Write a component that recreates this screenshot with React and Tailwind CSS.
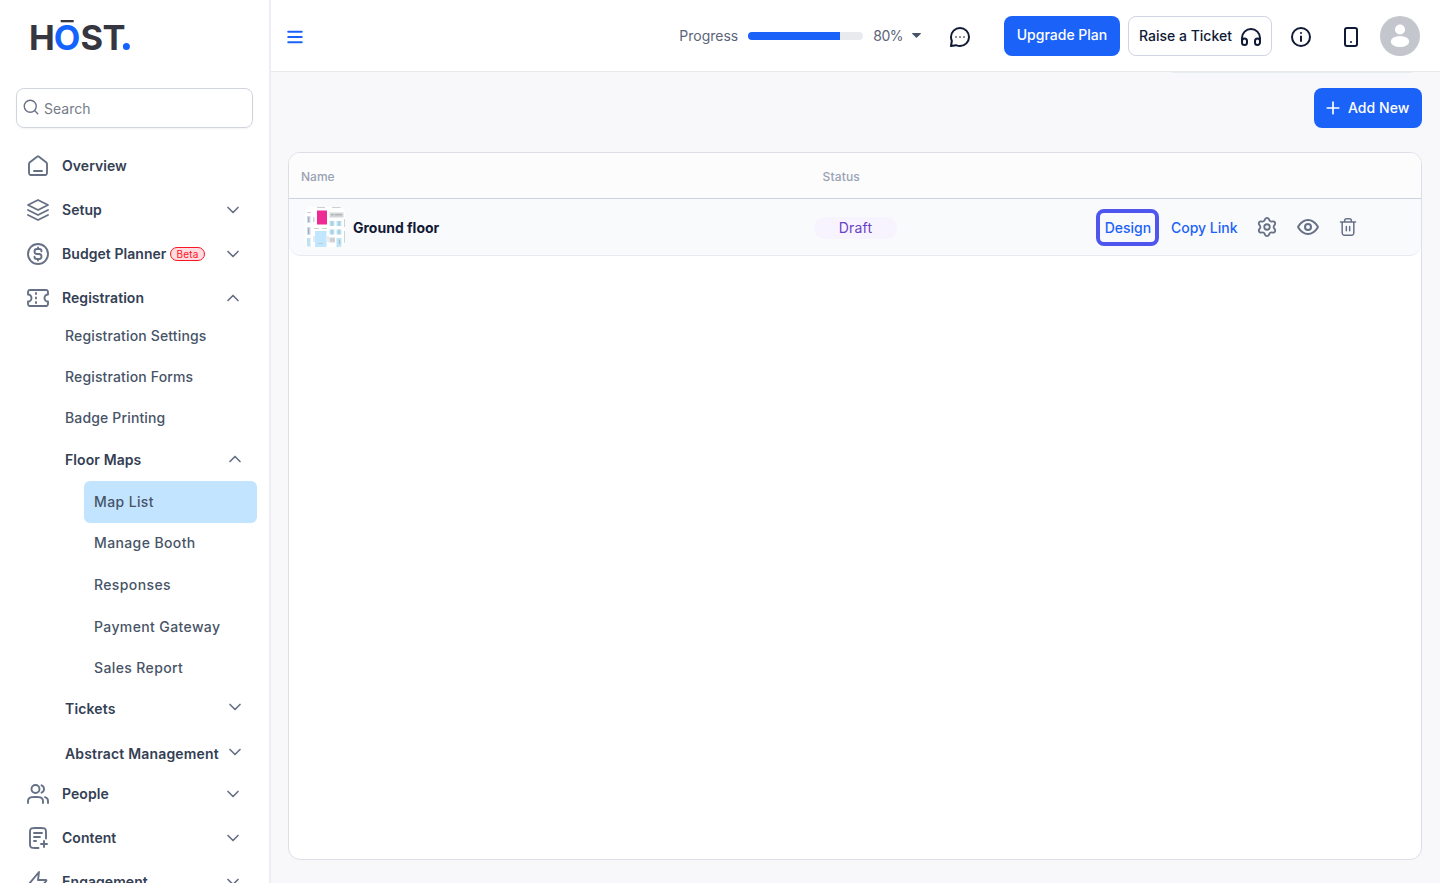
import React, { useState } from "react";

const icons = {
  home: "M8 17H16M11.0177 2.764L4.23539 8.03912C3.78202 8.39175 3.55534 8.56806 3.39203 8.78886C3.24737 8.98444 3.1396 9.20478 3.07403 9.43905C3 9.70352 3 9.9907 3 10.5651V17.8C3 18.9201 3 19.4801 3.21799 19.908C3.40973 20.2843 3.71569 20.5903 4.09202 20.782C4.51984 21 5.07989 21 6.2 21H17.8C18.9201 21 19.4802 21 19.908 20.782C20.2843 20.5903 20.5903 20.2843 20.782 19.908C21 19.4801 21 18.9201 21 17.8V10.5651C21 9.9907 21 9.70352 20.926 9.43905C20.8604 9.20478 20.7526 8.98444 20.608 8.78886C20.4447 8.56806 20.218 8.39175 19.7646 8.03913L12.9823 2.764C12.631 2.49075 12.4553 2.35412 12.2613 2.3016C12.0902 2.25526 11.9098 2.25526 11.7387 2.3016C11.5447 2.35412 11.369 2.49075 11.0177 2.764Z",
  layers: "M2 12L12 17L22 12M2 17L12 22L22 17M2 7L12 2L22 7L12 12L2 7Z",
  dollar: "M8.5 14.6667C8.5 15.9553 9.54467 17 10.8333 17H13C14.3807 17 15.5 15.8807 15.5 14.5C15.5 13.1193 14.3807 12 13 12H11C9.61929 12 8.5 10.8807 8.5 9.5C8.5 8.11929 9.61929 7 11 7H13.1667C14.4553 7 15.5 8.04467 15.5 9.33333M12 5.5V7M12 17V18.5M22 12a10 10 0 1 1-20 0a10 10 0 0 1 20 0Z",
  ticket: "M10 8V7M10 12.5V11.5M10 17V16M5.2 4H18.8C19.9201 4 20.4802 4 20.908 4.21799C21.2843 4.40973 21.5903 4.71569 21.782 5.09202C22 5.51984 22 6.0799 22 7.2V8.5C20.067 8.5 18.5 10.067 18.5 12C18.5 13.933 20.067 15.5 22 15.5V16.8C22 17.9201 22 18.4802 21.782 18.908C21.5903 19.2843 21.2843 19.5903 20.908 19.782C20.4802 20 19.9201 20 18.8 20H5.2C4.0799 20 3.51984 20 3.09202 19.782C2.71569 19.5903 2.40973 19.2843 2.21799 18.908C2 18.4802 2 17.9201 2 16.8V15.5C3.933 15.5 5.5 13.933 5.5 12C5.5 10.067 3.933 8.5 2 8.5V7.2C2 6.0799 2 5.51984 2.21799 5.09202C2.40973 4.71569 2.71569 4.40973 3.09202 4.21799C3.51984 4 4.0799 4 5.2 4Z",
  users: "M22 21V19C22 17.1362 20.7252 15.5701 19 15.126M15.5 3.29076C16.9659 3.88415 18 5.32131 18 7C18 8.67869 16.9659 10.1159 15.5 10.7092M17 21C17 19.1362 17 18.2044 16.6955 17.4693C16.2895 16.4892 15.5108 15.7105 14.5307 15.3045C13.7956 15 12.8638 15 11 15H8C6.13623 15 5.20435 15 4.46927 15.3045C3.48915 15.7105 2.71046 16.4892 2.30448 17.4693C2 18.2044 2 19.1362 2 21M13.5 7a4 4 0 1 1-8 0a4 4 0 0 1 8 0Z",
  file: "M20 12.5V6.8C20 5.11984 20 4.27976 19.673 3.63803C19.3854 3.07354 18.9265 2.6146 18.362 2.32698C17.7202 2 16.8802 2 15.2 2H8.8C7.11984 2 6.27976 2 5.63803 2.32698C5.07354 2.6146 4.6146 3.07354 4.32698 3.63803C4 4.27976 4 5.11984 4 6.8V17.2C4 18.8802 4 19.7202 4.32698 20.362C4.6146 20.9265 5.07354 21.3854 5.63803 21.673C6.27976 22 7.1198 22 8.79986 22H12.5M14 11H8M10 15H8M16 7H8M18 21V15M15 18H21",
  zap: "M13 2L4.09344 12.6879C3.74463 13.1064 3.57023 13.3157 3.56756 13.4925C3.56524 13.6461 3.63372 13.7923 3.75324 13.8889C3.89073 14 4.16316 14 4.70802 14H12L11 22L19.9065 11.3121C20.2553 10.8936 20.4297 10.6843 20.4324 10.5075C20.4347 10.3539 20.3663 10.2077 20.2467 10.1111C20.1092 10 19.8368 10 19.292 10H12L13 2Z",
  search: "M21 21L16.65 16.65M19 11a8 8 0 1 1-16 0a8 8 0 0 1 16 0Z",
  menu: "M3 12H21M3 5H21M3 19H21",
  down: "M6 9L12 15L18 9",
  up: "M18 15L12 9L6 15",
  plus: "M12 5V19M5 12H19",
  chat: "M21 12C21 16.9706 16.9706 21 12 21C10.8029 21 9.6603 20.7663 8.61549 20.3419C8.41552 20.2607 8.23472 20.202 8.01613 20.1778L3 21L3.82221 15.9839C3.8222 15.8 3.73927 15.5845 3.65806 15.3845C3.23374 14.3397 3 13.1971 3 12C3 7.02944 7.02944 3 12 3C16.9706 3 21 7.02944 21 12Z",
  headphones: "M21 16V13a9 9 0 0 0-18 0V16M5.5 20A2.5 2.5 0 0 1 3 17.5V16a2.5 2.5 0 0 1 5 0V17.5A2.5 2.5 0 0 1 5.5 20ZM18.5 20A2.5 2.5 0 0 1 16 17.5V16a2.5 2.5 0 0 1 5 0V17.5A2.5 2.5 0 0 1 18.5 20Z",
  info: "M12 16V11.5M12 8H12.01M21 12a9 9 0 1 1-18 0a9 9 0 0 1 18 0Z",
  phone: "M12 17H12.01M8 3H16A2 2 0 0 1 18 5V19A2 2 0 0 1 16 21H8A2 2 0 0 1 6 19V5A2 2 0 0 1 8 3Z",
  settings: "M9.3951 19.3711L9.97955 20.6856C10.1533 21.0768 10.4368 21.4093 10.7958 21.6426C11.1547 21.8759 11.5737 22.0001 12.0018 22C12.4299 22.0001 12.8488 21.8759 13.2078 21.6426C13.5667 21.4093 13.8503 21.0768 14.024 20.6856L14.6084 19.3711C14.8165 18.9047 15.1664 18.5159 15.6084 18.26C16.0532 18.0034 16.5678 17.8941 17.0784 17.9478L18.5084 18.1C18.9341 18.145 19.3637 18.0656 19.7451 17.8713C20.1265 17.6771 20.4434 17.3763 20.6573 17.0056C20.8715 16.635 20.9735 16.2103 20.951 15.7829C20.9285 15.3555 20.7825 14.9438 20.5307 14.5978L19.684 13.4344C19.3825 13.0171 19.2214 12.5148 19.224 12C19.2239 11.4866 19.3865 10.9864 19.6884 10.5711L20.5351 9.40778C20.787 9.06175 20.933 8.65007 20.9554 8.22267C20.9779 7.79528 20.8759 7.37054 20.6618 7C20.4479 6.62923 20.131 6.32849 19.7496 6.13423C19.3681 5.93997 18.9386 5.86053 18.5129 5.90556L17.0829 6.05778C16.5722 6.11141 16.0577 6.00212 15.6129 5.74556C15.17 5.48825 14.82 5.09736 14.6129 4.62889L14.024 3.31444C13.8503 2.92317 13.5667 2.59072 13.2078 2.3574C12.8488 2.12408 12.4299 1.99993 12.0018 2C11.5737 1.99993 11.1547 2.12408 10.7958 2.3574C10.4368 2.59072 10.1533 2.92317 9.97955 3.31444L9.3951 4.62889C9.18803 5.09736 8.83798 5.48825 8.3951 5.74556C7.95032 6.00212 7.43577 6.11141 6.9251 6.05778L5.49066 5.90556C5.06499 5.86053 4.6354 5.93997 4.25397 6.13423C3.87255 6.32849 3.55567 6.62923 3.34177 7C3.12759 7.37054 3.02555 7.79528 3.04804 8.22267C3.07052 8.65007 3.21656 9.06175 3.46844 9.40778L4.3151 10.5711C4.61704 10.9864 4.77964 11.4866 4.77955 12C4.77964 12.5134 4.61704 13.0137 4.3151 13.4289L3.46844 14.5922C3.21656 14.9382 3.07052 15.3499 3.04804 15.7773C3.02555 16.2047 3.12759 16.6295 3.34177 17C3.55589 17.3706 3.8728 17.6712 4.25417 17.8654C4.63554 18.0596 5.06502 18.1392 5.49066 18.0944L6.92066 17.9422C7.43133 17.8886 7.94587 17.9979 8.39066 18.2544C8.83519 18.511 9.18687 18.902 9.3951 19.3711ZM15 12a3 3 0 1 1-6 0a3 3 0 0 1 6 0Z",
  eye: "M2.42 12.713C2.284 12.498 2.216 12.39 2.178 12.225C2.149 12.1 2.149 11.9 2.178 11.776C2.216 11.61 2.284 11.503 2.42 11.287C3.546 9.505 6.895 5 12 5C17.105 5 20.455 9.505 21.581 11.287C21.717 11.503 21.785 11.61 21.823 11.776C21.852 11.9 21.852 12.1 21.823 12.225C21.785 12.39 21.717 12.498 21.581 12.713C20.455 14.495 17.105 19 12 19C6.895 19 3.546 14.495 2.42 12.713ZM15 12a3 3 0 1 1-6 0a3 3 0 0 1 6 0Z",
  trash: "M16 6V5.2C16 4.0799 16 3.51984 15.782 3.09202C15.5903 2.71569 15.2843 2.40973 14.908 2.21799C14.4802 2 13.9201 2 12.8 2H11.2C10.0799 2 9.51984 2 9.09202 2.21799C8.71569 2.40973 8.40973 2.71569 8.21799 3.09202C8 3.51984 8 4.0799 8 5.2V6M10 11.5V16.5M14 11.5V16.5M3 6H21M19 6V17.2C19 18.8802 19 19.7202 18.673 20.362C18.3854 20.9265 17.9265 21.3854 17.362 21.673C16.7202 22 15.8802 22 14.2 22H9.8C8.11984 22 7.27976 22 6.63803 21.673C6.07354 21.3854 5.6146 20.9265 5.32698 20.362C5 19.7202 5 18.8802 5 17.2V6",
};

const Icon = ({ name, size = 24, stroke = 2, className = "" }) => (
  <svg
    width={size}
    height={size}
    viewBox="0 0 24 24"
    fill="none"
    stroke="currentColor"
    strokeWidth={stroke}
    strokeLinecap="round"
    strokeLinejoin="round"
    className={`shrink-0 ${className}`}
  >
    <path d={icons[name]} />
  </svg>
);

const Logo = () => (
  <svg width="112" height="52" viewBox="-4 -8 112 52" className="mt-2.5 ml-6 shrink-0">
    <g fontFamily="Inter, sans-serif" fontSize="34.5" fontWeight="700" fill="#35363f">
      <text x="0.9" y="32">H</text>
      <text x="25.8" y="32" fill="#1463ff">O</text>
      <text x="52.4" y="32">S</text>
      <text x="74.4" y="32">T</text>
    </g>
    <rect x="32.7" y="2" width="13" height="2.3" fill="#35363f" />
    <circle cx="98.4" cy="28.4" r="3.5" fill="#1463ff" />
  </svg>
);

const NavRow = ({ icon, label, chevron, beta, onClick }) => (
  <button onClick={onClick} className="flex h-11 w-full shrink-0 items-center pr-[26px] pl-[26px] text-[#344054]">
    <Icon name={icon} stroke={1.9} className="mr-3 text-[#667085]" />
    <span className="text-sm font-semibold tracking-[0.05px]">{label}</span>
    {beta && (
      <span className="ml-1 flex h-[14px] items-center rounded-full border border-[#fb1424] bg-[#ffdcdf] px-[5px] text-[10px] tracking-[0.2px] text-[#fb1424]">
        Beta
      </span>
    )}
    {chevron && <Icon name={chevron} size={20} className="ml-auto text-[#667085]" />}
  </button>
);

const SubRow = ({ label, chevron, className = "" }) => (
  <div className={`flex h-8 shrink-0 items-center pr-6 pl-[65px] text-sm whitespace-nowrap ${className}`}>
    <span>{label}</span>
    {chevron && <Icon name={chevron} size={20} className="mb-[3px] ml-auto text-[#667085]" />}
  </div>
);

const mapLinks = ["Map List", "Manage Booth", "Responses", "Payment Gateway", "Sales Report"];

const Sidebar = () => {
  const [open, setOpen] = useState(true);
  const [active, setActive] = useState("Map List");

  return (
    <aside className="flex w-[271px] shrink-0 flex-col overflow-hidden border-r-2 border-[#ededf3] bg-white">
      <Logo />
      <div className="mx-4 mt-[26px] mb-4 flex h-10 w-[237px] shrink-0 items-center rounded-lg border border-[#d0d5dd] px-[5px] shadow-xs">
        <Icon name="search" size={18} stroke={1.8} className="mb-0.5 text-[#667085]" />
        <input
          placeholder="Search"
          className="mt-0.5 ml-1 w-48 text-sm outline-none placeholder:text-[#757b87]"
        />
      </div>
      <NavRow icon="home" label="Overview" />
      <NavRow icon="layers" label="Setup" chevron="down" />
      <NavRow icon="dollar" label="Budget Planner" chevron="down" beta />
      <NavRow icon="ticket" label="Registration" chevron={open ? "up" : "down"} onClick={() => setOpen(!open)} />
      {open && (
        <div className="mb-0.5 flex shrink-0 flex-col">
          <div className="flex flex-col gap-[9px] font-medium tracking-[0.15px] text-[#475467]">
            <SubRow label="Registration Settings" />
            <SubRow label="Registration Forms" />
            <SubRow label="Badge Printing" />
          </div>
          <SubRow label="Floor Maps" chevron="up" className="mt-2.5 mb-[5px] font-semibold tracking-[0.1px] text-[#344054]" />
          <div className="ml-[84px] w-[173px]">
            {mapLinks.map((label) => (
              <button
                key={label}
                onClick={() => setActive(label)}
                className={`flex h-[41.6px] w-full items-center rounded-md pl-2.5 text-sm font-medium tracking-[0.38px] text-[#475467] ${
                  active === label ? "bg-[#c2e4ff]" : ""
                }`}
              >
                {label}
              </button>
            ))}
          </div>
          <SubRow label="Tickets" chevron="down" className="mt-1 font-semibold tracking-[0.15px] text-[#344054]" />
          <SubRow label="Abstract Management" chevron="down" className="mt-[13px] font-semibold tracking-[0.17px] text-[#344054]" />
        </div>
      )}
      <NavRow icon="users" label="People" chevron="down" />
      <NavRow icon="file" label="Content" chevron="down" />
      <NavRow icon="zap" label="Engagement" chevron="down" />
    </aside>
  );
};

const Header = () => (
  <header className="flex h-[72px] shrink-0 items-center border-b border-[#e6e8ec] bg-white pr-5 pl-[15px] text-sm text-[#101935]">
    <Icon name="menu" size={18} stroke={2.7} className="mt-0.5 text-[#1b62f8]" />
    <div className="ml-auto flex items-center text-[#5b6478]">
      <span>Progress</span>
      <div className="ml-2.5 h-2 w-[115px] overflow-hidden rounded-full bg-[#e7ebee]">
        <div className="h-full w-4/5 bg-[#1b62f8]" />
      </div>
      <span className="ml-2.5 tracking-[-0.5px]">80%</span>
      <svg width="9" height="5" viewBox="0 0 9 5" className="ml-[9px]">
        <path d="M0.5 0H8.5Q9.3 0.4 8.6 1L5 4.6Q4.5 5 4 4.6L0.4 1Q-0.3 0.4 0.5 0Z" fill="#475467" />
      </svg>
    </div>
    <div className="relative mt-0.5 ml-[27px]">
      <Icon name="chat" />
      <div className="absolute top-[11px] left-[7px] flex gap-[2px]">
        <i className="size-0.5 rounded-full bg-[#6b7280]" />
        <i className="size-0.5 rounded-full bg-[#6b7280]" />
        <i className="size-0.5 rounded-full bg-[#6b7280]" />
      </div>
    </div>
    <button className="ml-8 h-10 w-[116px] rounded-lg bg-[#1b62f8] pb-0.5 font-medium text-white">
      Upgrade Plan
    </button>
    <button className="ml-2 flex h-10 w-36 items-center justify-between rounded-lg border border-[#d0d3e0] pr-2 pl-2.5 font-medium whitespace-nowrap">
      Raise a Ticket
      <Icon name="headphones" className="mt-0.5" />
    </button>
    <Icon name="info" className="mt-0.5 ml-[17px]" />
    <Icon name="phone" className="mt-0.5 ml-[26px]" />
    <svg width="40" height="40" viewBox="0 0 40 40" className="ml-[17px]">
      <circle cx="20" cy="20" r="20" fill="#c4c6ce" />
      <circle cx="20" cy="13.5" r="5" fill="#fff" />
      <ellipse cx="20" cy="25.5" rx="9.2" ry="5.6" fill="#fff" />
    </svg>
  </header>
);

// small preview of the floor plan
const Thumb = () => (
  <svg width="40" height="40" viewBox="0 0 40 40" className="rounded-md bg-white">
    <rect x="12" y="3.5" width="10" height="14" fill="#ee2a95" />
    <rect x="10" y="24" width="11.5" height="16" fill="#c0e7fd" />
    <path d="M24.5 5.5H38.5V10.5H24.5Z" fill="#d4d6d8" />
    <path d="M26 7.8H29M30 7.8H37" stroke="#a4a8ac" strokeWidth="1" />
    <path d="M24.5 14h5v5h-5zM31.5 14h5v5h-5zM24.5 22.5h5v5h-5zM31.5 22.5h5v5h-5zM31.5 31h5v9h-5zM2 9h3.5v7H2zM2 20h3.5v8H2zM2 31h3.5v9H2z" fill="#bfe2f2" />
    <path d="M27 14v5M34 14v5M27 22.5v5M34 22.5v5M34.5 33v4" stroke="#8fb8cb" strokeWidth=".8" />
    <path d="M3.7 10v5M3.7 21v6" stroke="#c98fa0" strokeWidth="1" />
    <path d="M24.5 30.5h5.5v5h-5.5zM8 10h1.5v5H8zM8.5 29h1v6h-1zM22.5 29h1v6h-1z" fill="#d2d4d6" />
    <path d="M2 5.5H6M9 21.5H14M17 21.5H22M13 36.5H18M25.5 33H29M12 .5H20M27 .5H36" stroke="#c0c4c8" strokeWidth=".8" />
    <path d="M39.5 12V20M39.5 24V36" stroke="#d0d3d6" strokeWidth="1" />
  </svg>
);

const App = () => {
  return (
    <div className="flex h-screen overflow-hidden bg-[#f8f8fb] font-['Inter',sans-serif]">
      <Sidebar />
      <div className="flex min-w-0 flex-1 flex-col">
        <Header />
        <div className="mr-7 ml-auto h-px w-60 shrink-0 bg-[#e7ecf1]" />
        <main className="flex min-h-0 flex-1 flex-col pt-[15px] pr-[18px] pb-[23px] pl-[17px]">
          <button className="flex h-10 w-[108px] shrink-0 items-center gap-1 self-end rounded-lg bg-[#1b62f8] pl-[9px] text-sm font-medium tracking-[0.05px] whitespace-nowrap text-white">
            <Icon name="plus" size={20} />
            <span className="ml-px">Add New</span>
          </button>
          <section className="mt-6 flex-1 overflow-hidden rounded-xl border border-[#dddfe7] bg-white">
            <div className="flex h-[46px] items-center border-b border-[#cdd1e0] bg-[#fcfcfd] pt-0.5 pl-3 text-xs text-[#98a2b3]">
              <span className="w-[521.5px] font-medium">Name</span>
              <span className="font-medium tracking-[0.15px]">Status</span>
            </div>
            <div className="flex h-[57px] items-center rounded-b-xl border-b border-[#e6e9ef] bg-[#f9fafc] pl-4 text-sm">
              <Thumb />
              <span className="mt-0.5 ml-2 w-[461px] font-bold text-[#101935]">Ground floor</span>
              <span className="mt-0.5 flex h-[22px] w-[83px] items-center justify-center rounded-full bg-[#f8f4ff] tracking-[0.2px] text-[#6941c6]">
                Draft
              </span>
              <div className="ml-auto flex items-center pr-[63px] font-medium whitespace-nowrap text-[#1b62f8]">
                <button className="h-[37px] w-[63px] rounded-lg border-4 border-[#4f56ee] pt-0.5">Design</button>
                <button className="mt-0.5 ml-[11.5px]">Copy Link</button>
                <Icon name="settings" size={22} className="ml-[18.5px] text-[#667085]" />
                <Icon name="eye" className="ml-[18px] text-[#667085]" />
                <Icon name="trash" size={20} stroke={1.8} className="ml-[18px] text-[#667085]" />
              </div>
            </div>
          </section>
        </main>
      </div>
    </div>
  );
};

export default App;
